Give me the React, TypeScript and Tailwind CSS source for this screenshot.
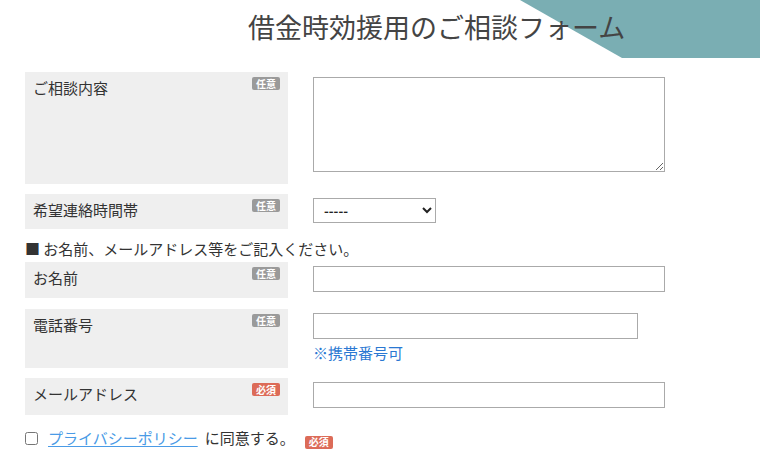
import * as React from 'react';

const Badge: React.FC<{ required?: boolean }> = ({ required }) => (
    <span
        className={`flex items-center justify-center w-[28px] h-[13px] rounded-[2px] text-[10px] font-bold leading-none text-white ${required ? 'bg-[#dc6b58]' : 'bg-[#9a9a9a]'}`}
    >
        {required ? '必須' : '任意'}
    </span>
);

const Label: React.FC<{ text: string; required?: boolean; h: string }> = ({ text, required, h }) => (
    <div className={`w-[263px] shrink-0 bg-[#efefef] flex justify-between items-start pl-[8px] pr-[8px] ${h}`}>
        <span className="pt-[5px] text-[15px] leading-[22px] text-[#333]">{text}</span>
        <div className="flex pt-[5px]"><Badge required={required} /></div>
    </div>
);

const inputCls = 'block bg-white border border-[#aaa] outline-none';

const App: React.FC = () => {
    return (
        <div
            className="relative w-[760px] h-[457px] overflow-hidden bg-white text-[#333]"
            style={{ fontFamily: '"Noto Sans CJK JP", "Noto Sans", sans-serif' }}
        >
            {/* decorative corner */}
            <svg className="absolute top-0 left-0" width="760" height="58" viewBox="0 0 760 58">
                <polygon points="520,0 760,0 760,58 622,58" fill="#7aaeb3" />
            </svg>

            <h1 className="relative pl-[248px] pt-[8px] h-[72px] text-[27px] leading-[38px] text-[#444] font-normal">
                借金時効援用のご相談フォーム
            </h1>

            <div className="relative pl-[25px] flex flex-col">
                {/* ご相談内容 */}
                <div className="flex gap-[25px]">
                    <Label text="ご相談内容" h="h-[112px]" />
                    <div className="pt-[5px]">
                        <textarea className={`${inputCls} w-[352px] h-[95px] resize-y`} />
                    </div>
                </div>

                {/* 希望連絡時間帯 */}
                <div className="flex gap-[25px] mt-[10px]">
                    <Label text="希望連絡時間帯" h="h-[35px]" />
                    <div className="pt-[4px]">
                        <select className="block w-[123px] h-[25px] bg-white border border-[#aaa] text-[13px] font-bold pl-[6px] text-[#222]">
                            <option>-----</option>
                        </select>
                    </div>
                </div>

                <p className="mt-[9px] h-[24px] text-[15px] leading-[22px] text-[#333]">■ お名前、メールアドレス等をご記入ください。</p>

                {/* お名前 */}
                <div className="flex gap-[25px]">
                    <Label text="お名前" h="h-[36px]" />
                    <div className="pt-[4px]">
                        <input type="text" className={`${inputCls} w-[352px] h-[26px]`} />
                    </div>
                </div>

                {/* 電話番号 */}
                <div className="flex gap-[25px] mt-[11px]">
                    <Label text="電話番号" h="h-[59px]" />
                    <div className="pt-[4px]">
                        <input type="tel" className={`${inputCls} w-[325px] h-[26px]`} />
                        <p className="mt-[3px] text-[15px] leading-[22px] text-[#2a78d2]">※携帯番号可</p>
                    </div>
                </div>

                {/* メールアドレス */}
                <div className="flex gap-[25px] mt-[10px]">
                    <Label text="メールアドレス" required h="h-[37px]" />
                    <div className="pt-[4px]">
                        <input type="email" className={`${inputCls} w-[352px] h-[26px]`} />
                    </div>
                </div>

                {/* 同意 */}
                <div className="flex items-center mt-[11px] h-[24px]">
                    <input type="checkbox" className="w-[13px] h-[13px] m-0" />
                    <a href="#" className="ml-[10px] text-[15px] leading-[22px] text-[#4a9be6] underline underline-offset-2">
                        プライバシーポリシー
                    </a>
                    <span className="ml-[7px] text-[15px] leading-[22px] text-[#333]">に同意する。</span>
                    <div className="flex ml-[10px] mt-[8px]"><Badge required /></div>
                </div>
            </div>
        </div>
    );
};

export default App;
